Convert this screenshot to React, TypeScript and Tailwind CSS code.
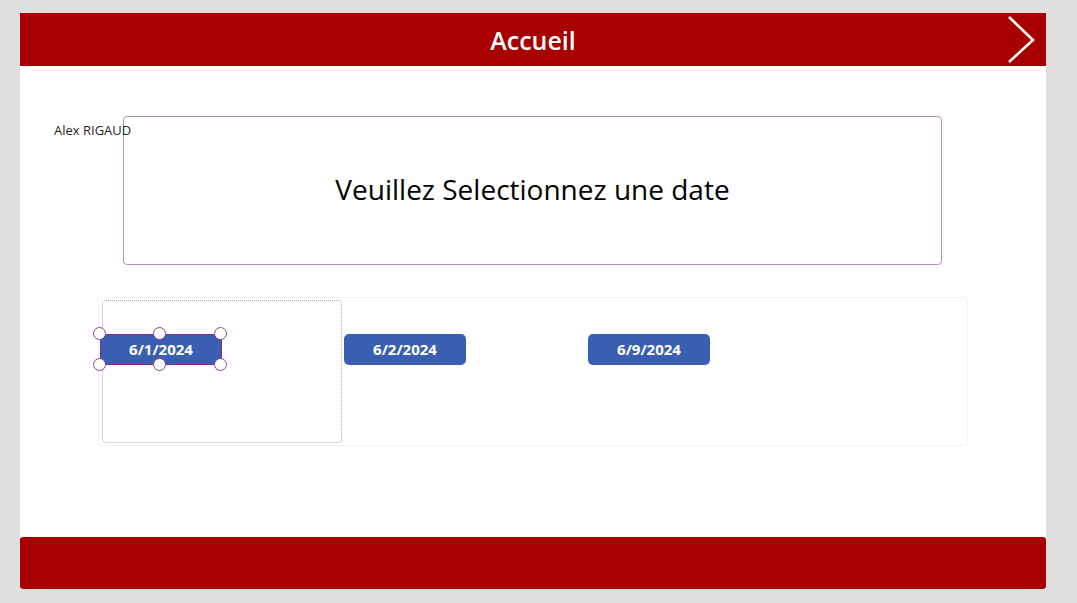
const DATES = [
  { id: 'd1', label: '6/1/2024', selected: true },
  { id: 'd2', label: '6/2/2024', selected: false },
  { id: 'd3', label: '6/9/2024', selected: false },
];

function Handles() {
  const spots = [
    'left-[-7px] top-[-7px]',
    'left-[53px] top-[-7px]',
    'left-[114px] top-[-7px]',
    'left-[-7px] top-[24px]',
    'left-[53px] top-[24px]',
    'left-[114px] top-[24px]',
  ];
  return (
    <>
      {spots.map((s) => (
        <span
          key={s}
          className={'absolute w-[13px] h-[13px] rounded-full bg-white border border-[#8a4596] ' + s}
        />
      ))}
    </>
  );
}

export default function App() {
  return (
    <div
      className="w-[1077px] h-[603px] bg-[#dfdfdf] pt-[13px] pl-[20px]"
      style={{ fontFamily: '"Open Sans", "Noto Sans", sans-serif' }}
    >
      <div className="w-[1026px] h-[576px] bg-white flex flex-col">
        {/* Header */}
        <div className="relative h-[53px] bg-[#a80000] flex items-center justify-center">
          <span className="text-white text-[25px] font-semibold leading-none mt-[1px]">Accueil</span>
          <svg
            className="absolute right-[9px] top-0"
            width="32"
            height="53"
            viewBox="0 0 32 53"
            fill="none"
          >
            <path d="M4 4 L28 27 L4 49" stroke="white" strokeWidth="2.6" />
          </svg>
        </div>

        {/* Title row */}
        <div className="flex pt-[50px] pl-[34px]">
          <div className="w-[69px] shrink-0 mt-[6px] whitespace-nowrap text-[13px] leading-[17px] text-[#1f1f1f] relative z-10">
            Alex RIGAUD
          </div>
          <div className="w-[819px] h-[149px] border border-[#b88cc5] rounded-[4px] flex items-center justify-center">
            <span className="text-[28px] text-black leading-none mb-[3px]">Veuillez Selectionnez une date</span>
          </div>
        </div>

        {/* Gallery */}
        <div className="mt-[32px] ml-[78px] w-[870px] h-[149px] border border-dotted border-[#e6e6e6] rounded-[4px] pl-[1px] flex">
          {DATES.map((d) => (
            <div key={d.id} className="relative w-[244px] h-full pt-[36px]">
              {d.selected && (
                <div className="absolute left-[2px] top-[2px] w-[240px] h-[143px] border border-dotted border-[#c79bd0] rounded-[4px]" />
              )}
              <div className="relative w-[122px] h-[31px]">
                <button
                  className={
                    'w-full h-full bg-[#3a5fb0] text-white text-[15px] font-bold flex items-center justify-center ' +
                    (d.selected ? 'border border-[#7a2f8c]' : 'rounded-[5px]')
                  }
                >
                  {d.label}
                </button>
                {d.selected && <Handles />}
              </div>
            </div>
          ))}
        </div>

        {/* Footer */}
        <div className="mt-auto h-[52px] bg-[#a80000] rounded-[3px]" />
      </div>
    </div>
  );
}
